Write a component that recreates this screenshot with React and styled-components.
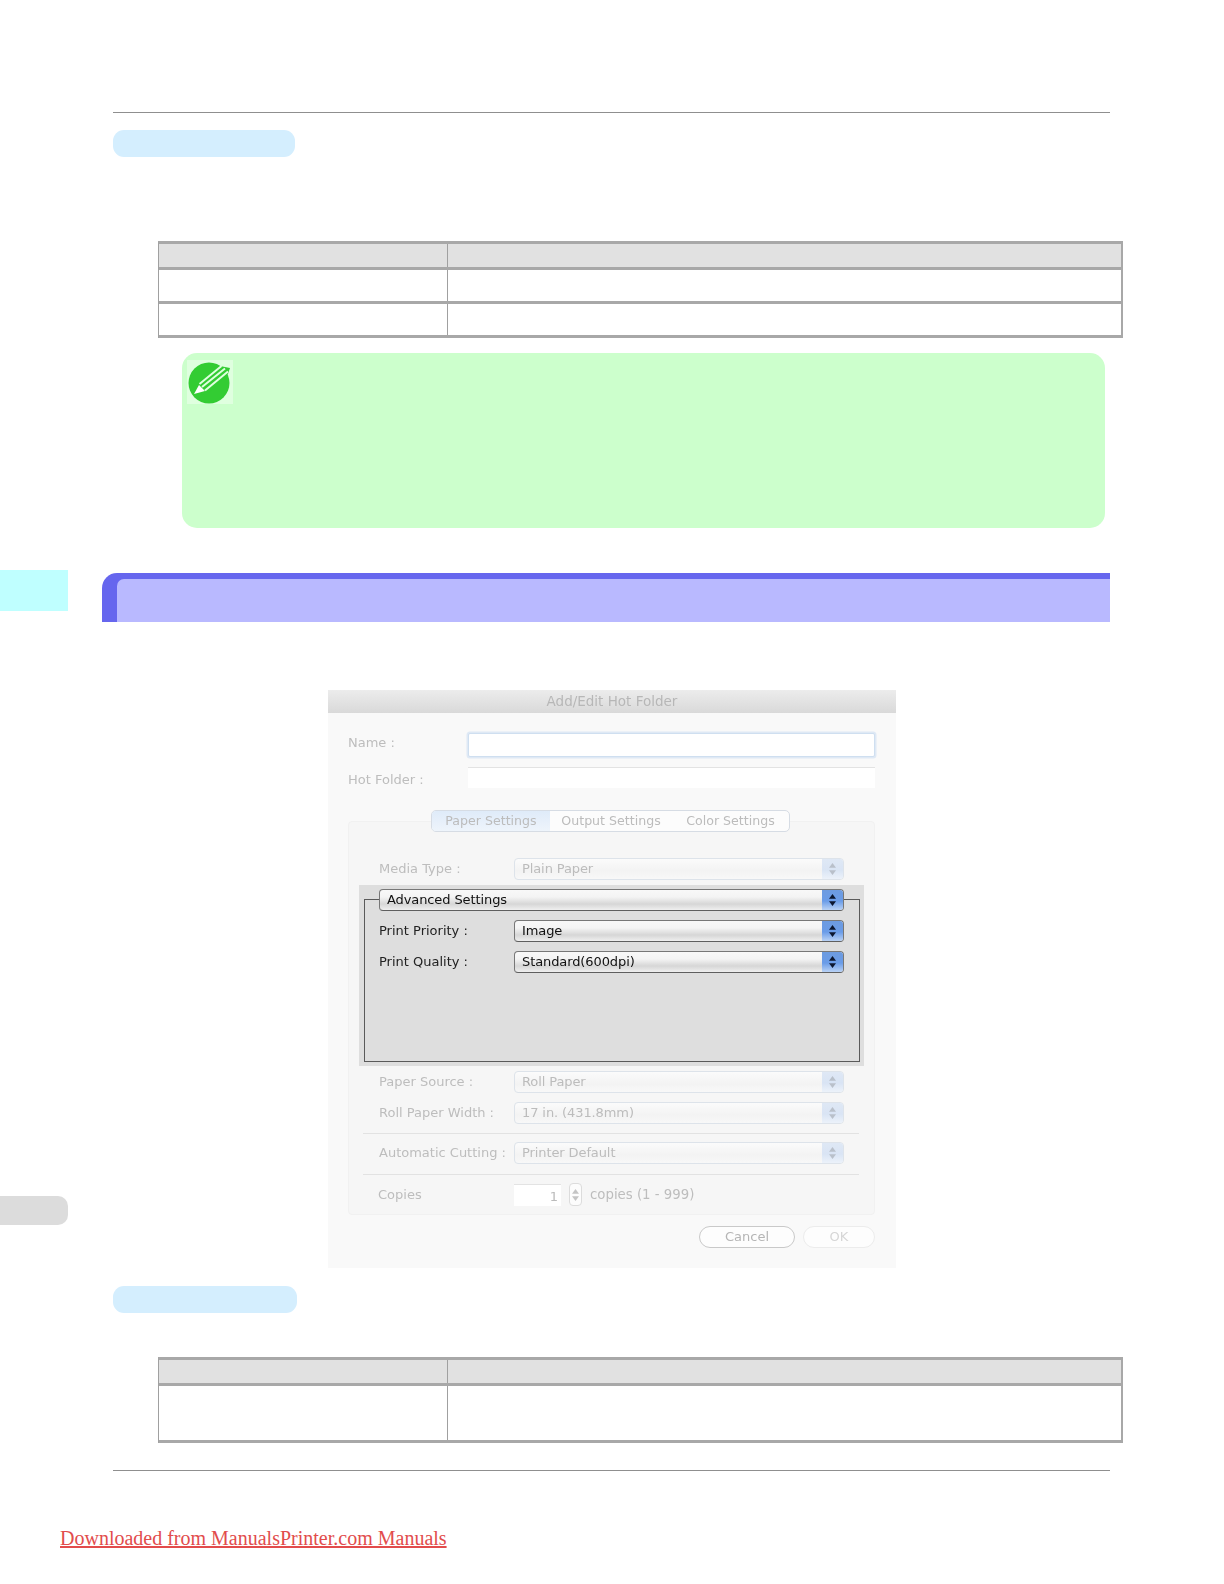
import React from 'react'
import styled, { createGlobalStyle } from 'styled-components'

const DIALOG_FONT = '"DejaVu Sans", "Liberation Sans", sans-serif'

const GlobalStyle = createGlobalStyle`
    html, body {
        margin: 0;
        padding: 0;
        background: #fff;
    }
`

const Page = styled.div`
    display: flex;
    width: 1224px;
    height: 1584px;
    overflow: hidden;
    font-family: "Liberation Sans", sans-serif;
`

const Rail = styled.aside`
    flex: 0 0 68px;
    padding-top: 570px;
`

const RailTab = styled.div`
    height: ${p => p.$height}px;
    margin-bottom: ${p => p.$gap || 0}px;
    background: ${p => p.$color};
    border-radius: ${p => p.$radius || 0};
`

const Main = styled.main`
    flex: 1;
    padding: 112px 0 0 34px;
`

const Rule = styled.hr`
    width: 997px;
    height: 1px;
    margin: ${p => p.$top || 0}px 0 0 11px;
    border: 0;
    background: #8f8f8f;
`

const Pill = styled.div`
    width: ${p => p.$width}px;
    height: 27px;
    margin: ${p => p.$top}px 0 0 11px;
    border-radius: 11px;
    background: #d4eefe;
`

const Table = styled.div`
    box-sizing: border-box;
    width: 965px;
    margin: ${p => p.$top}px 0 0 56px;
    border-top: 3px solid #a8a8a8;
    border-left: 1px solid #a0a0a0;
    border-right: 2px solid #a8a8a8;
`

const TableRow = styled.div`
    display: grid;
    grid-template-columns: 288px 1fr;
    height: ${p => p.$height}px;
    background: ${p => (p.$head ? '#e1e1e1' : '#fff')};
    border-bottom: 3px solid #a8a8a8;
`

const TableCell = styled.div`
    & + & {
        border-left: 1px solid #a0a0a0;
    }
`

const Note = styled.section`
    box-sizing: border-box;
    width: 923px;
    height: 175px;
    margin: 15px 0 0 80px;
    padding: 7px 0 0 5px;
    border-radius: 15px;
    background: #ccffcc;
`

const NoteBadge = styled.div`
    display: flex;
    align-items: center;
    justify-content: center;
    width: 46px;
    height: 44px;
    background: #dfffdf;
`

const Banner = styled.header`
    box-sizing: border-box;
    width: 1008px;
    height: 49px;
    margin-top: 45px;
    padding: 6px 0 0 15px;
    border-radius: 15px 0 0 0;
    background: #6666ee;
`

const BannerInner = styled.div`
    height: 43px;
    border-radius: 7px 0 0 0;
    background: #b9b9ff;
`

const Dialog = styled.div`
    box-sizing: border-box;
    width: 568px;
    height: 578px;
    margin: 68px 0 0 226px;
    background: #f9f9f9;
    font-family: ${DIALOG_FONT};
    font-size: 13px;
    color: #b9b9b9;
    filter: blur(0.4px);
`

const TitleBar = styled.div`
    height: 23px;
    line-height: 23px;
    text-align: center;
    background: linear-gradient(#ececec, #d9d9d9);
    font-size: 13.5px;
    color: #b7b7b7;
`

const DialogBody = styled.div`
    padding: 20px 21px 0 20px;
`

const FieldRow = styled.div`
    display: grid;
    grid-template-columns: 120px 1fr;
    align-items: center;
    height: ${p => p.$height}px;
    margin-bottom: ${p => p.$gap}px;
`

const FieldLabel = styled.span`
    font-size: 13px;
    color: #bdbdbd;
    margin-top: ${p => p.$shift || 0}px;
`

const TextField = styled.div`
    box-sizing: border-box;
    height: 100%;
    background: #fff;
    border-top: 1px solid #e3e3e3;
    ${p => p.$focused && `
        border: 1px solid #cfdff0;
        border-radius: 2px;
        box-shadow: 0 0 0 1.5px #dfe9f5;
    `}
`

const GroupBox = styled.div`
    box-sizing: border-box;
    height: 394px;
    margin-top: 33px;
    padding: 0 10px;
    border: 1px solid #f1f1f1;
    border-radius: 4px;
    background: #f6f6f6;
`

const TabBar = styled.div`
    display: flex;
    width: 359px;
    height: 22px;
    margin: -12px 0 0 72px;
    border: 1px solid #d6dce4;
    border-radius: 5px;
    background: #fcfcfc;
    overflow: hidden;
    box-sizing: border-box;
`

const TabItem = styled.div`
    flex: ${p => p.$grow};
    line-height: 20px;
    text-align: center;
    font-size: 12.6px;
    color: #bcbcbc;
    background: ${p => (p.$active ? 'linear-gradient(#dfebf9, #eef4fb)' : 'transparent')};
`

const SelectRow = styled.div`
    display: grid;
    grid-template-columns: 135px 330px;
    align-items: center;
    height: 22px;
    margin: ${p => p.$top}px 0 0 ${p => p.$left}px;
`

const RowLabel = styled.span`
    margin-top: -2px;
    font-size: 13px;
    white-space: nowrap;
    color: ${p => (p.$active ? '#222' : '#bdbdbd')};
`

const SelectBox = styled.div`
    box-sizing: border-box;
    display: flex;
    align-items: stretch;
    justify-content: space-between;
    height: 22px;
    border-radius: 4px;
    overflow: hidden;
    font-size: 13px;
    letter-spacing: -0.1px;
    line-height: 20px;
    ${p => (p.$active
        ? `
        border: 1px solid #777;
        border-bottom-color: #5f5f5f;
        color: #111;
        background: linear-gradient(#f8f8f8 0%, #f4f4f4 35%, #d6d6d6 70%, #efefef 100%);
    `
        : `
        border: 1px solid #dde3ea;
        color: #bcbcbc;
        background: linear-gradient(#fbfbfb, #f3f3f3 60%, #f8f8f8);
    `)}
`

const SelectText = styled.span`
    padding-left: 7px;
`

const Stepper = styled.span`
    display: flex;
    align-items: center;
    justify-content: center;
    width: 21px;
    background: ${p => (p.$active
        ? 'linear-gradient(#6d9be0, #6a9ce8 55%, #b9d2f5)'
        : 'linear-gradient(#dfe8f5, #d9e4f4 55%, #ecf2fa)')};
`

const AdvancedPanel = styled.div`
    box-sizing: border-box;
    height: 181px;
    margin-top: 5px;
    padding: 14px 4px 4px 5px;
    background: #dedede;
`

const AdvancedFrame = styled.div`
    box-sizing: border-box;
    height: 163px;
    border: 1px solid #5a5a5a;
`

const AdvancedHead = styled.div`
    width: 465px;
    margin: -11px 0 0 14px;
`

const Separator = styled.hr`
    height: 1px;
    margin: ${p => p.$top}px 5px 0 4px;
    border: 0;
    background: #e2e2e2;
`

const CopiesRow = styled.div`
    display: flex;
    align-items: center;
    height: 23px;
    margin: 8px 0 0 19px;
`

const CopiesLabel = styled.span`
    width: 136px;
    font-size: 13px;
    color: #bdbdbd;
`

const CopiesInput = styled.div`
    box-sizing: border-box;
    width: 47px;
    height: 22px;
    padding-right: 3px;
    text-align: right;
    line-height: 23px;
    background: #fff;
    border-top: 1px solid #e3e3e3;
    color: #bbb;
`

const SpinBox = styled.div`
    box-sizing: border-box;
    display: flex;
    align-items: center;
    justify-content: center;
    width: 13px;
    height: 23px;
    margin: 0 8px;
    border: 1px solid #dcdcdc;
    border-radius: 4px;
    background: #fcfcfc;
`

const CopiesHint = styled.span`
    font-size: 13.3px;
    color: #bdbdbd;
`

const ButtonRow = styled.div`
    display: flex;
    justify-content: flex-end;
    gap: 8px;
    margin-top: 11px;
`

const DialogButton = styled.div`
    box-sizing: border-box;
    width: ${p => p.$width}px;
    height: 22px;
    line-height: 19px;
    text-align: center;
    font-size: 13px;
    border-radius: 11px;
    background: #fdfdfd;
    border: 1px solid ${p => (p.$disabled ? '#ececec' : '#c9c9c9')};
    color: ${p => (p.$disabled ? '#d6d6d6' : '#b5b5b5')};
`

const FooterLink = styled.a`
    display: block;
    margin: 55px 0 0 -42px;
    font-family: "Liberation Serif", serif;
    font-size: 20px;
    line-height: 24px;
    color: #e24c4c;
    text-decoration: underline;
`

function UpDown({ color }) {
    return (
        <svg width="9" height="14" viewBox="0 0 9 14">
            <path d="M4.5 1 L8 5.7 L1 5.7 Z M4.5 13 L8 8.3 L1 8.3 Z" fill={color} />
        </svg>
    )
}

function Select({ value, active }) {
    return (
        <SelectBox $active={active}>
            <SelectText>{value}</SelectText>
            <Stepper $active={active}>
                <UpDown color={active ? '#0c1730' : '#b9c0ca'} />
            </Stepper>
        </SelectBox>
    )
}

function PencilBadge() {
    return (
        <svg width="46" height="44" viewBox="0 0 46 44">
            <circle cx="22" cy="23" r="20.5" fill="#33cc33" />
            <path d="M11 32 L33 6 L43 8 L41 14 L18 36 Z" fill="#33cc33" />
            <path d="M7 34 L12 25 L18 31 Z" fill="#fff" />
            <path d="M12.5 24 L34.5 6 M15 27 L38 8.5 M18 30.5 L41 11.5" stroke="#dfffdf" strokeWidth="2" fill="none" />
        </svg>
    )
}

export default function App() {
    return (
        <Page>
            <GlobalStyle />
            <Rail>
                <RailTab $height={41} $gap={585} $color="#bfffff" />
                <RailTab $height={29} $color="#dcdcdc" $radius="0 10px 10px 0" />
            </Rail>
            <Main>
                <Rule />
                <Pill $width={182} $top={17} />
                <Table $top={84}>
                    <TableRow $head $height={23}><TableCell /><TableCell /></TableRow>
                    <TableRow $height={31}><TableCell /><TableCell /></TableRow>
                    <TableRow $height={31}><TableCell /><TableCell /></TableRow>
                </Table>
                <Note>
                    <NoteBadge><PencilBadge /></NoteBadge>
                </Note>
                <Banner><BannerInner /></Banner>
                <Dialog>
                    <TitleBar>Add/Edit Hot Folder</TitleBar>
                    <DialogBody>
                        <FieldRow $height={24} $gap={10}>
                            <FieldLabel $shift={-6}>Name :</FieldLabel>
                            <TextField $focused />
                        </FieldRow>
                        <FieldRow $height={21} $gap={0}>
                            <FieldLabel $shift={3}>Hot Folder :</FieldLabel>
                            <TextField />
                        </FieldRow>
                        <GroupBox>
                            <TabBar>
                                <TabItem $active $grow={118}>Paper Settings</TabItem>
                                <TabItem $grow={122}>Output Settings</TabItem>
                                <TabItem $grow={117}>Color Settings</TabItem>
                            </TabBar>
                            <SelectRow $top={26} $left={20}>
                                <RowLabel>Media Type :</RowLabel>
                                <Select value="Plain Paper" />
                            </SelectRow>
                            <AdvancedPanel>
                                <AdvancedFrame>
                                    <AdvancedHead><Select active value="Advanced Settings" /></AdvancedHead>
                                    <SelectRow $top={9} $left={14}>
                                        <RowLabel $active>Print Priority :</RowLabel>
                                        <Select active value="Image" />
                                    </SelectRow>
                                    <SelectRow $top={9} $left={14}>
                                        <RowLabel $active>Print Quality :</RowLabel>
                                        <Select active value="Standard(600dpi)" />
                                    </SelectRow>
                                </AdvancedFrame>
                            </AdvancedPanel>
                            <SelectRow $top={5} $left={20}>
                                <RowLabel>Paper Source :</RowLabel>
                                <Select value="Roll Paper" />
                            </SelectRow>
                            <SelectRow $top={9} $left={20}>
                                <RowLabel>Roll Paper Width :</RowLabel>
                                <Select value="17 in. (431.8mm)" />
                            </SelectRow>
                            <Separator $top={9} />
                            <SelectRow $top={8} $left={20}>
                                <RowLabel>Automatic Cutting :</RowLabel>
                                <Select value="Printer Default" />
                            </SelectRow>
                            <Separator $top={10} />
                            <CopiesRow>
                                <CopiesLabel>Copies</CopiesLabel>
                                <CopiesInput>1</CopiesInput>
                                <SpinBox><UpDown color="#c4c4c4" /></SpinBox>
                                <CopiesHint>copies (1 - 999)</CopiesHint>
                            </CopiesRow>
                        </GroupBox>
                        <ButtonRow>
                            <DialogButton $width={96}>Cancel</DialogButton>
                            <DialogButton $width={72} $disabled>OK</DialogButton>
                        </ButtonRow>
                    </DialogBody>
                </Dialog>
                <Pill $width={184} $top={18} />
                <Table $top={44}>
                    <TableRow $head $height={23}><TableCell /><TableCell /></TableRow>
                    <TableRow $height={54}><TableCell /><TableCell /></TableRow>
                </Table>
                <Rule $top={27} />
                <FooterLink href="#">Downloaded from ManualsPrinter.com Manuals</FooterLink>
            </Main>
        </Page>
    )
}
